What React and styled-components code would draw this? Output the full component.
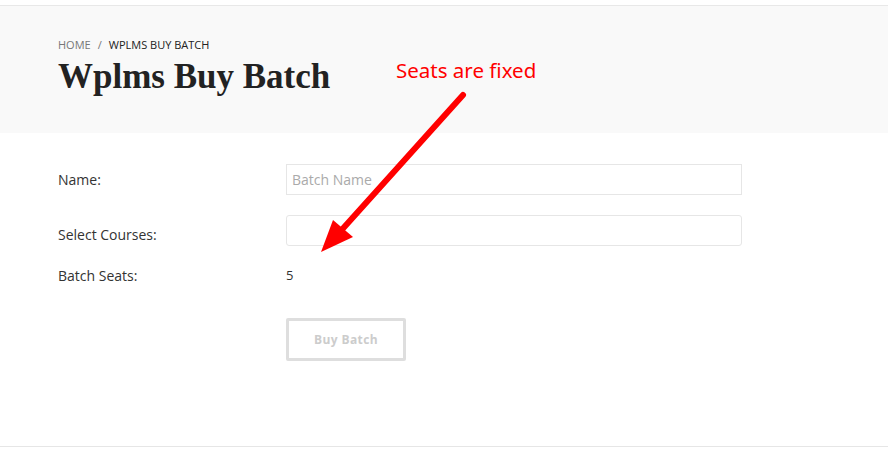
import React from 'react';
import styled, { createGlobalStyle } from 'styled-components';

const GlobalStyle = createGlobalStyle`
  body {
    margin: 0;
    padding: 0;
    background: #fff;
    font-family: "Open Sans", "Liberation Sans", sans-serif;
  }
`;

const Page = styled.div`
  position: relative;
  width: 888px;
  height: 456px;
  overflow: hidden;
  background: #fff;
  padding-top: 5px;
  box-sizing: border-box;
`;

const Header = styled.header`
  background: #f9f9f9;
  border-top: 1px solid #e8e8e8;
  height: 128px;
  box-sizing: border-box;
  padding: 31px 58px 0;
`;

const Crumbs = styled.div`
  font-size: 11px;
  line-height: 16px;
  text-transform: uppercase;
  color: #222;
  display: flex;
  gap: 7px;
`;

const Crumb = styled.span`
  color: ${p => (p.muted ? '#777' : '#222')};
`;

const Title = styled.h1`
  margin: 2px 0 0;
  font-family: "Liberation Serif", "Times New Roman", serif;
  font-weight: bold;
  font-size: 35px;
  line-height: 44px;
  color: #222;
`;

const Form = styled.div`
  display: grid;
  grid-template-columns: 228px 456px;
  padding: 31px 0 0 58px;
  row-gap: 20px;
  align-items: center;
`;

const Label = styled.label`
  font-size: 14px;
  color: #333;
  padding-top: ${p => p.shift || 0}px;
`;

const Input = styled.input`
  height: 31px;
  box-sizing: border-box;
  border: 1px solid #e6e6e6;
  border-radius: ${p => (p.rounded ? '3px' : '0')};
  padding: 0 5px;
  font-family: "Open Sans", sans-serif;
  font-size: 14px;
  color: #333;
  background: #fff;
  outline: none;
  &::placeholder {
    color: #aaa;
  }
`;

const Value = styled.div`
  font-size: 13px;
  color: #333;
  margin-top: -2px;
`;

const Button = styled.button`
  grid-column: 2;
  justify-self: start;
  margin-top: 13px;
  width: 120px;
  height: 43px;
  border: 3px solid #dedede;
  border-radius: 2px;
  background: #fff;
  color: #ccc;
  font-family: "Open Sans", sans-serif;
  font-weight: bold;
  font-size: 12px;
  letter-spacing: 0.4px;
`;

const Footer = styled.div`
  position: absolute;
  left: 0;
  right: 0;
  top: 446px;
  border-top: 1px solid #e6e6e6;
`;

const Note = styled.div`
  position: absolute;
  left: 396px;
  top: 56px;
  font-family: "Noto Sans", "Open Sans", sans-serif;
  font-size: 20.5px;
  color: #f00;
`;

const Arrow = styled.svg`
  position: absolute;
  left: 0;
  top: 0;
  pointer-events: none;
`;

export default function App() {
  return (
    <>
      <GlobalStyle />
      <Page>
        <Header>
          <Crumbs>
            <Crumb muted>Home</Crumb>
            <Crumb muted>/</Crumb>
            <Crumb>Wplms Buy Batch</Crumb>
          </Crumbs>
          <Title>Wplms Buy Batch</Title>
        </Header>
        <Form>
          <Label>Name:</Label>
          <Input placeholder="Batch Name" />
          <Label shift={8}>Select Courses:</Label>
          <Input rounded />
          <Label>Batch Seats:</Label>
          <Value>5</Value>
          <Button>Buy Batch</Button>
        </Form>
        <Footer />
        <Note>Seats are fixed</Note>
        <Arrow width="888" height="456">
          <line x1="463" y1="95" x2="338" y2="234" stroke="#f00" strokeWidth="6" strokeLinecap="round" />
          <polygon points="321,252 333,220 353,237" fill="#f00" />
        </Arrow>
      </Page>
    </>
  );
}
